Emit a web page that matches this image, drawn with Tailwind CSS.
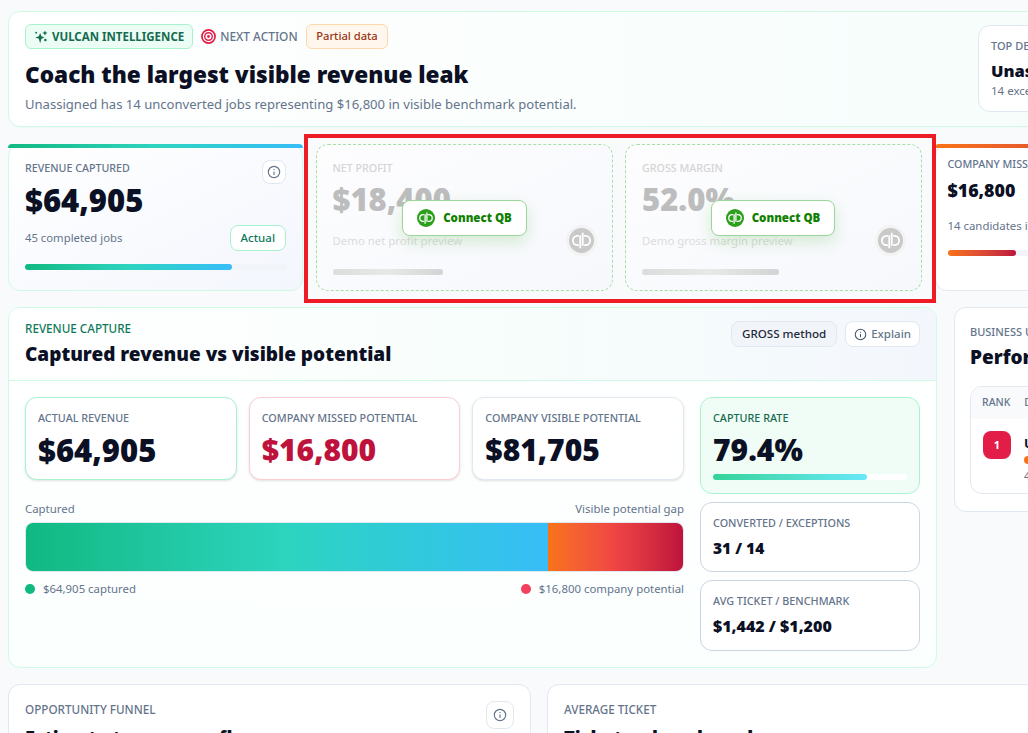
<!DOCTYPE html>
<html lang="en">
<head>
  <meta charset="UTF-8">
  <title>Vulcan Intelligence</title>
  <script src="https://cdn.jsdelivr.net/npm/@tailwindcss/browser@4"></script>
</head>
<body class="bg-[#f8fafc] h-[733px] overflow-hidden font-['Noto_Sans',sans-serif] text-[#0b1024]">
  <div class="relative w-[1028px] h-[733px] overflow-hidden pl-[8px] pt-[11px]">

    <!-- Next action header -->
    <header class="w-[1117px] h-[116px] rounded-xl border border-[#d1fae5] bg-gradient-to-r from-white to-[#f5fdfb] px-4 pt-3 flex justify-between shadow-[0_1px_2px_rgba(0,0,0,0.02)]">
      <div>
        <div class="flex items-center h-[25px]">
          <span class="flex items-center gap-1 h-[25px] px-2 rounded-md border border-[#a7f3d0] bg-[#ecfdf5] text-[11.500px] font-bold text-[#166b4f]">
            <svg class="w-[14px] h-[14px]" viewBox="0 0 16 16" fill="#166b4f"><path d="M7 3.500l1.500 3.500L12 8.500 8.500 10 7 15 5.500 10 1.500 8.500 5.500 7z"/><path d="M12.500 .5l.9 2.100 2.100.9-2.100.9-.9 2.100-.9-2.100-2.100-.9 2.100-.9z"/><circle cx="13" cy="11.500" r="1.400"/><circle cx="2.500" cy="3" r="1.100"/></svg>
            VULCAN INTELLIGENCE
          </span>
          <svg class="ml-2 w-[15px] h-[15px]" viewBox="0 0 16 16" fill="none"><circle cx="8" cy="8" r="7" stroke="#e11d48" stroke-width="1.800"/><circle cx="8" cy="8" r="4" stroke="#e11d48" stroke-width="1.500"/><circle cx="8" cy="8" r="1.500" fill="#e11d48"/></svg>
          <span class="ml-1 text-[11.900px] font-medium text-[#64748b]">NEXT ACTION</span>
          <span class="ml-2 flex items-center h-[25px] px-[9.500px] rounded-md border border-[#fed7aa] bg-[#fff7ed] text-[11.200px] font-medium text-[#9a3412]">Partial data</span>
        </div>
        <h1 class="mt-[10px] text-[22.600px] leading-[32px] font-black text-[#0b1024]">Coach the largest visible revenue leak</h1>
        <p class="mt-[3px] text-[13.070px] leading-[20px] text-[#64748b]">Unassigned has 14 unconverted jobs representing $16,800 in visible benchmark potential.</p>
      </div>
      <div class="mr-[10px] mt-[1px] w-[120px] h-[87px] rounded-xl border border-[#e2e8f0] bg-white px-3 pt-[12px]">
        <div class="text-[11px] leading-[16px] font-medium text-[#64748b] whitespace-nowrap">TOP DEFICIT</div>
        <div class="mt-[7px] text-[16.500px] leading-[20px] font-black whitespace-nowrap">Unassigned</div>
        <div class="mt-[1px] text-[11.500px] leading-[18px] text-[#64748b] whitespace-nowrap">14 exceptions</div>
      </div>
    </header>

    <!-- KPI row -->
    <div class="mt-[17px] grid grid-cols-[295px_297px_297px_300px] gap-x-[12.500px] h-[147px]">
      <div class="relative rounded-xl border border-[#d1fae5] bg-gradient-to-br from-white to-[#f3f6fd] px-4 pt-[15px]">
        <div class="absolute -inset-x-px -top-px h-1 rounded-t-xl bg-gradient-to-r from-[#10b981] via-[#2dd4bf] to-[#38bdf8]"></div>
        <div class="flex justify-between items-start">
          <div class="text-[10.700px] leading-[16px] font-medium text-[#64748b]">REVENUE CAPTURED</div>
          <span class="flex items-center justify-center w-6 h-6 rounded-lg border border-[#e2e8f0] bg-white">
            <svg class="w-[14px] h-[14px]" viewBox="0 0 16 16" fill="none" stroke="#64748b" stroke-width="1.300"><circle cx="8" cy="8" r="6.500"/><path d="M8 7.300v4M8 4.500v1.200"/></svg>
          </span>
        </div>
        <div class="-mt-[3px] text-[31px] leading-[38px] font-black">$64,905</div>
        <div class="mt-[6px] flex justify-between items-center">
          <span class="text-[11.300px] text-[#64748b]">45 completed jobs</span>
          <span class="flex items-center h-[26px] px-[10px] rounded-lg border border-[#a7f3d0] bg-white text-[11.500px] font-medium text-[#0f7a5a]">Actual</span>
        </div>
        <div class="mt-[13px] h-[6px] rounded-full bg-[#f1f5f9]">
          <div class="h-full w-[79.400%] rounded-full bg-gradient-to-r from-[#10b981] via-[#2dd4bf] to-[#38bdf8]"></div>
        </div>
      </div>

      <div class="relative rounded-xl border border-dashed border-[#a8dfa8] bg-gradient-to-br from-[#fdfdfe] to-[#f6f8fc] px-4 pt-[15px]">
        <div class="text-[10.700px] leading-[16px] font-medium text-[#d4d4d4]">NET PROFIT</div>
        <div class="mt-[4px] text-[31px] leading-[38px] font-black text-[#bdbdbd]">$18,400</div>
        <div class="mt-[14px] text-[11.400px] leading-[18px] text-[#dcdcdc]">Demo net profit preview</div>
        <div class="mt-[19px] h-[6px] w-[110px] rounded-full bg-gradient-to-r from-[#dcdcdc] via-[#e8e8e8] to-[#d4d4d4]"></div>
        <span class="absolute right-[15px] top-[80px] flex items-center justify-center w-[31px] h-[31px] rounded-full bg-[#f3f3f3]">
          <svg class="w-[25px] h-[25px]" viewBox="0 0 24 24"><circle cx="12" cy="12" r="12" fill="#c9c9c9"/><path d="M9.500 7.500H8.200a4.500 4.500 0 0 0 0 9h1.300M10.800 7V19.500M14.500 16.500h1.300a4.500 4.500 0 0 0 0-9h-1.300M13.200 4.500V17" fill="none" stroke="#fff" stroke-width="1.700"/></svg>
        </span>
        <span class="absolute left-[85.500px] top-[55px] flex items-center gap-2 h-9 w-[125px] justify-center rounded-lg border border-[#9ad69a] bg-white shadow-[0_6px_16px_rgba(44,160,28,0.18)] text-[11.500px] font-black text-[#108000]">
          <svg class="w-[18px] h-[18px]" viewBox="0 0 24 24"><circle cx="12" cy="12" r="12" fill="#2ca01c"/><path d="M9.500 7.500H8.200a4.500 4.500 0 0 0 0 9h1.300M10.800 7V19.500M14.500 16.500h1.300a4.500 4.500 0 0 0 0-9h-1.300M13.200 4.500V17" fill="none" stroke="#fff" stroke-width="1.700"/></svg>
          Connect QB
        </span>
      </div>

      <div class="relative rounded-xl border border-dashed border-[#a8dfa8] bg-gradient-to-br from-[#fdfdfe] to-[#f6f8fc] px-4 pt-[15px]">
        <div class="text-[10.700px] leading-[16px] font-medium text-[#d4d4d4]">GROSS MARGIN</div>
        <div class="mt-[4px] text-[31px] leading-[38px] font-black text-[#bdbdbd]">52.0%</div>
        <div class="mt-[14px] text-[11.400px] leading-[18px] text-[#dcdcdc]">Demo gross margin preview</div>
        <div class="mt-[19px] h-[6px] w-[137px] rounded-full bg-gradient-to-r from-[#dcdcdc] via-[#e8e8e8] to-[#d4d4d4]"></div>
        <span class="absolute right-[15px] top-[80px] flex items-center justify-center w-[31px] h-[31px] rounded-full bg-[#f3f3f3]">
          <svg class="w-[25px] h-[25px]" viewBox="0 0 24 24"><circle cx="12" cy="12" r="12" fill="#c9c9c9"/><path d="M9.500 7.500H8.200a4.500 4.500 0 0 0 0 9h1.300M10.800 7V19.500M14.500 16.500h1.300a4.500 4.500 0 0 0 0-9h-1.300M13.200 4.500V17" fill="none" stroke="#fff" stroke-width="1.700"/></svg>
        </span>
        <span class="absolute left-[85px] top-[55px] flex items-center gap-2 h-9 w-[124px] justify-center rounded-lg border border-[#9ad69a] bg-white shadow-[0_6px_16px_rgba(44,160,28,0.18)] text-[11.500px] font-black text-[#108000]">
          <svg class="w-[18px] h-[18px]" viewBox="0 0 24 24"><circle cx="12" cy="12" r="12" fill="#2ca01c"/><path d="M9.500 7.500H8.200a4.500 4.500 0 0 0 0 9h1.300M10.800 7V19.500M14.500 16.500h1.300a4.500 4.500 0 0 0 0-9h-1.300M13.200 4.500V17" fill="none" stroke="#fff" stroke-width="1.700"/></svg>
          Connect QB
        </span>
      </div>

      <div class="relative rounded-xl border border-[#e2e8f0] bg-white px-3 pt-[11px] whitespace-nowrap">
        <div class="absolute -inset-x-px -top-px h-1 rounded-t-xl bg-gradient-to-r from-[#f97316] to-[#be123c]"></div>
        <div class="text-[10.700px] leading-[16px] font-medium text-[#64748b]">COMPANY MISSED POTENTIAL</div>
        <div class="mt-[5px] text-[17.800px] leading-[26px] font-black">$16,800</div>
        <div class="mt-[14px] text-[11.400px] leading-[18px] text-[#64748b]">14 candidates in queue</div>
        <div class="mt-[15px] h-[6px] rounded-full bg-[#f1f5f9] w-[270px]">
          <div class="h-full w-[25.500%] rounded-full bg-gradient-to-r from-[#f97316] to-[#be123c]"></div>
        </div>
      </div>
    </div>

    <!-- Main row -->
    <div class="mt-[16px] flex items-start gap-[17px]">
      <section class="w-[929px] h-[361px] shrink-0 rounded-xl border border-[#d1fae5] bg-gradient-to-b from-white to-[#fbfffe] overflow-hidden">
        <div class="h-[73px] border-b border-[#d1fae5] bg-gradient-to-r from-white via-[#f8fefb] to-[#f3f7fd] px-4 pt-[11px] flex justify-between">
          <div>
            <div class="text-[11.700px] leading-[18px] font-medium text-[#0f7a5a]">REVENUE CAPTURE</div>
            <h2 class="mt-[4px] text-[19px] leading-[27px] font-black">Captured revenue vs visible potential</h2>
          </div>
          <div class="flex items-start gap-2 pt-[2px]">
            <span class="flex items-center h-[26px] px-[10px] rounded-lg border border-[#e2e8f0] bg-[#f1f5f9] text-[11.600px] font-medium text-[#1e293b]">GROSS method</span>
            <span class="flex items-center gap-1 h-[26px] px-[8px] rounded-lg border border-[#e2e8f0] bg-white text-[11.500px] font-medium text-[#64748b]">
              <svg class="w-[13px] h-[13px]" viewBox="0 0 16 16" fill="none" stroke="#475569" stroke-width="1.300"><circle cx="8" cy="8" r="6.500"/><path d="M8 7.300v4M8 4.500v1.200"/></svg>
              Explain
            </span>
          </div>
        </div>
        <div class="flex gap-4 px-4 pt-4">
          <div class="w-[659px]">
            <div class="grid grid-cols-3 gap-3">
              <div class="h-[83px] rounded-xl border border-[#a7f3d0] bg-white px-3 pt-3 shadow-sm">
                <div class="text-[10.800px] leading-[16px] font-medium text-[#64748b]">ACTUAL REVENUE</div>
                <div class="mt-[5px] text-[31px] leading-[38px] font-black">$64,905</div>
              </div>
              <div class="h-[83px] rounded-xl border border-[#fecdd3] bg-white px-3 pt-3 shadow-sm">
                <div class="text-[10.800px] leading-[16px] font-medium text-[#64748b]">COMPANY MISSED POTENTIAL</div>
                <div class="mt-[5px] text-[30px] leading-[38px] font-black text-[#be123c]">$16,800</div>
              </div>
              <div class="h-[83px] rounded-xl border border-[#e2e8f0] bg-white px-3 pt-3 shadow-sm">
                <div class="text-[10.800px] leading-[16px] font-medium text-[#64748b]">COMPANY VISIBLE POTENTIAL</div>
                <div class="mt-[5px] text-[30px] leading-[38px] font-black">$81,705</div>
              </div>
            </div>
            <div class="mt-[20px] flex justify-between text-[11.400px] leading-[18px] text-[#64748b]">
              <span>Captured</span><span>Visible potential gap</span>
            </div>
            <div class="mt-[4px] flex h-[50px] rounded-lg border border-[#e2e8f0] overflow-hidden">
              <div class="w-[79.400%] bg-gradient-to-r from-[#10b981] via-[#2dd4bf] to-[#38bdf8]"></div>
              <div class="flex-1 bg-gradient-to-r from-[#f97316] via-[#ef4444] to-[#be123c]"></div>
            </div>
            <div class="mt-[8px] flex justify-between text-[11.400px] leading-[18px] text-[#64748b]">
              <span class="flex items-center gap-2"><i class="w-[10px] h-[10px] rounded-full bg-[#10b981]"></i>$64,905 captured</span>
              <span class="flex items-center gap-2"><i class="w-[10px] h-[10px] rounded-full bg-[#f43f5e]"></i>$16,800 company potential</span>
            </div>
          </div>
          <div class="w-[220px] flex flex-col gap-2">
            <div class="h-[97px] rounded-xl border border-[#a7f3d0] bg-[#f0fdf7] px-3 pt-3">
              <div class="text-[10.800px] leading-[16px] font-medium text-[#166b4f]">CAPTURE RATE</div>
              <div class="mt-[5px] text-[30px] leading-[38px] font-black">79.4%</div>
              <div class="mt-[5px] h-[6px] rounded-full bg-white">
                <div class="h-full w-[79.400%] rounded-full bg-gradient-to-r from-[#34d399] to-[#67e8f9]"></div>
              </div>
            </div>
            <div class="h-[70px] rounded-xl border border-[#cbd5e1] bg-white px-3 pt-3">
              <div class="text-[10.800px] leading-[16px] font-medium text-[#64748b]">CONVERTED / EXCEPTIONS</div>
              <div class="mt-[7px] text-[15.500px] leading-[20px] font-black">31 / 14</div>
            </div>
            <div class="h-[71px] rounded-xl border border-[#cbd5e1] bg-white px-3 pt-3">
              <div class="text-[10.800px] leading-[16px] font-medium text-[#64748b]">AVG TICKET / BENCHMARK</div>
              <div class="mt-[7px] text-[16px] leading-[20px] font-black">$1,442 / $1,200</div>
            </div>
          </div>
        </div>
      </section>

      <section class="w-[300px] h-[205px] shrink-0 rounded-xl border border-[#e2e8f0] bg-white px-[15px] pt-[15px] whitespace-nowrap">
        <div class="text-[11px] leading-[18px] font-medium text-[#64748b]">BUSINESS UNIT</div>
        <h2 class="mt-[3px] text-[19px] leading-[27px] font-black">Performance</h2>
        <div class="mt-[15px] h-[108px] rounded-xl border border-[#e2e8f0] overflow-hidden">
          <div class="h-[32px] bg-[#f8fafc] flex items-center gap-[14px] px-[11px] text-[10.500px] font-medium text-[#64748b]"><span>RANK</span><span>DEPARTMENT</span></div>
          <div class="flex gap-[13px] pl-[12px] pt-[12px]">
            <span class="flex items-center justify-center w-[28px] h-[28px] rounded-lg bg-[#e11d48] text-white text-[11px] font-bold">1</span>
            <div>
              <div class="mt-[2px] text-[13px] leading-[20px] font-bold">Unassigned</div>
              <div class="mt-[3px] w-2 h-2 rounded-full bg-[#f97316]"></div>
              <div class="text-[11px] leading-[14px] mt-[5px] text-[#64748b]">45 jobs</div>
            </div>
          </div>
        </div>
      </section>
    </div>

    <!-- Bottom row -->
    <div class="mt-[16px] flex gap-4">
      <section class="w-[523px] h-[120px] shrink-0 rounded-xl border border-[#e2e8f0] bg-white px-4 pt-[15px]">
        <div class="flex justify-between items-start">
          <div class="text-[11.700px] leading-[18px] font-medium text-[#64748b]">OPPORTUNITY FUNNEL</div>
          <span class="flex items-center justify-center w-[28px] h-[28px] mt-[1px] rounded-lg border border-[#e2e8f0] bg-white">
            <svg class="w-[14px] h-[14px]" viewBox="0 0 16 16" fill="none" stroke="#64748b" stroke-width="1.300"><circle cx="8" cy="8" r="6.500"/><path d="M8 7.300v4M8 4.500v1.200"/></svg>
          </span>
        </div>
        <h2 class="-mt-[5px] text-[18.200px] leading-[27px] font-black">Estimate to revenue flow</h2>
      </section>
      <section class="w-[520px] h-[120px] shrink-0 rounded-xl border border-[#e2e8f0] bg-white px-4 pt-[15px]">
        <div class="text-[11.700px] leading-[18px] font-medium text-[#64748b]">AVERAGE TICKET</div>
        <h2 class="mt-[6px] text-[18.200px] leading-[27px] font-black">Ticket vs benchmark</h2>
      </section>
    </div>

    <!-- review highlight drawn over the screenshot -->
    <div class="absolute left-[304px] top-[134px] w-[632px] h-[169px] border-[4px] border-[#ee1c25] pointer-events-none"></div>
  </div>
</body>
</html>
